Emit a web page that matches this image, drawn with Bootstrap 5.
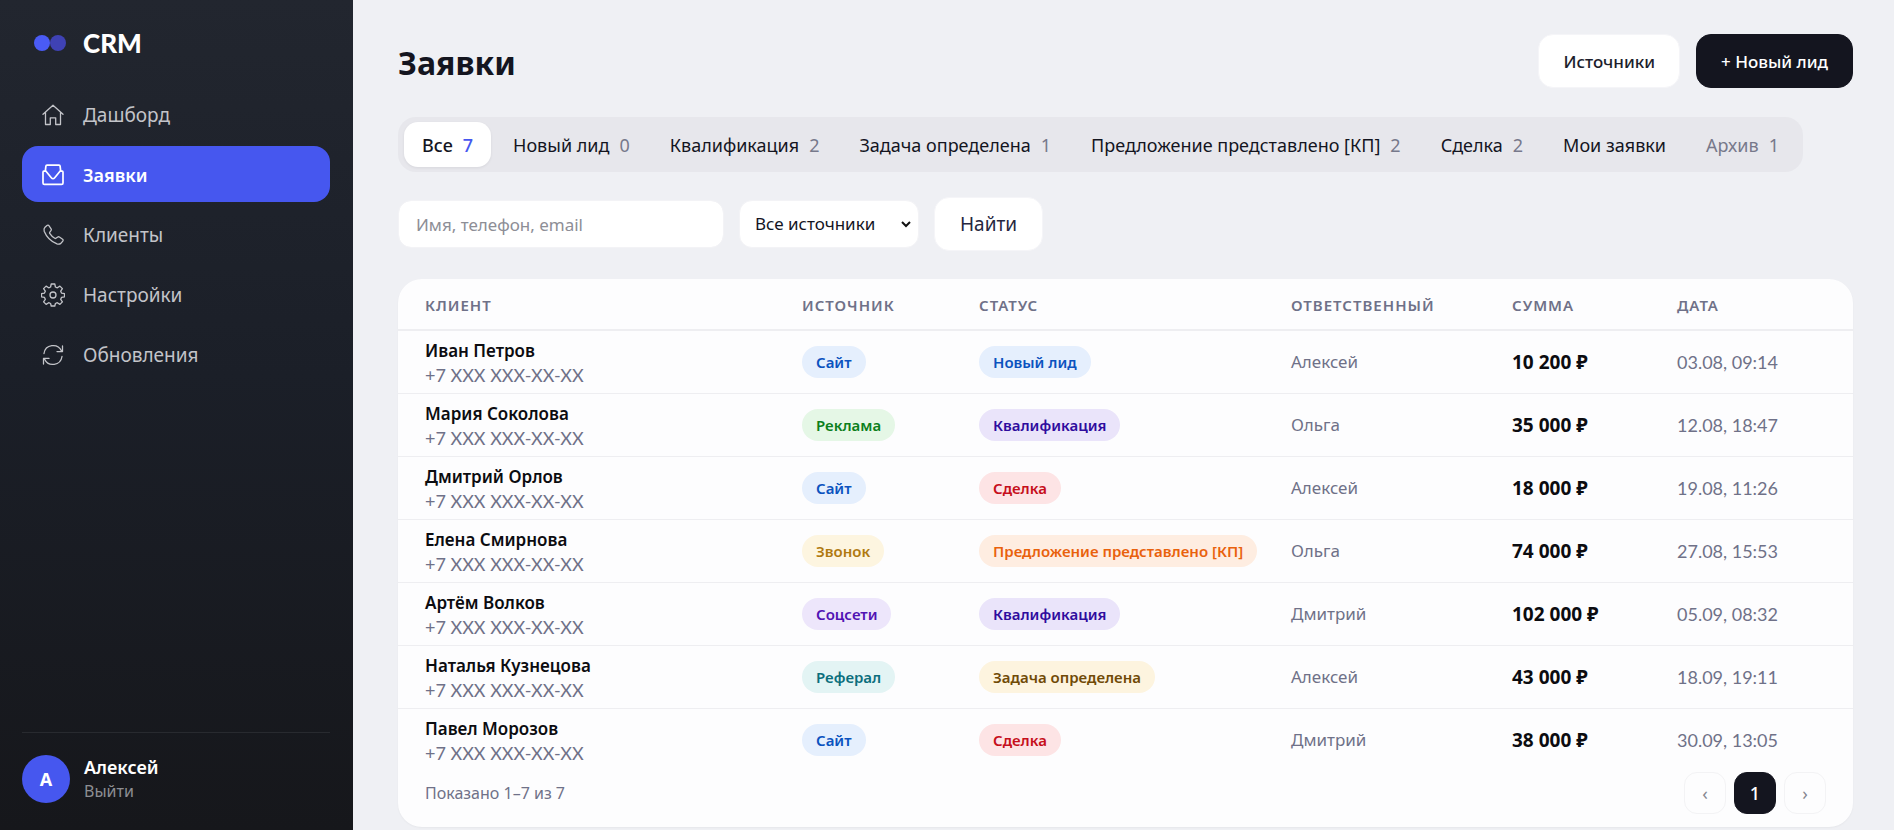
<!DOCTYPE html>
<html lang="ru">
<head>
<meta charset="utf-8">
<meta name="viewport" content="width=device-width, initial-scale=1">
<title>CRM — Заявки</title>
<link href="https://cdn.jsdelivr.net/npm/bootstrap@5.3.0/dist/css/bootstrap.min.css" rel="stylesheet">
<style>
:root{--ink:#14151f;--muted:#6f7188;--accent:#4657ef;--line:#eeeef1}
body{font-family:"Noto Sans","Open Sans",sans-serif;font-size:18px;line-height:24px;color:var(--ink);background:#eff0f4}
a{text-decoration:none}

.sidebar{width:353px;padding:24px 23px 27px 22px;background:linear-gradient(180deg,#22262f 0%,#1b1f28 45%,#16171b 100%)}
.brand{gap:17px;padding-left:12px;height:38px;font:900 26px/38px Lato,"Noto Sans",sans-serif;color:#fff}
.side-nav{gap:4px;margin-top:24px}
.side-nav .nav-link{display:flex;align-items:center;gap:18px;height:56px;padding:2px 19px 0;border-radius:16px;font-size:19px;color:#c3c4c9}
.side-nav .nav-link.active{background:var(--accent);color:#fff;font-weight:600;font-size:18px}
.side-nav svg{width:24px;height:24px;flex:none;fill:none;stroke:currentColor;stroke-width:1.3;stroke-linecap:round;stroke-linejoin:round}
.side-nav .active svg{stroke-width:1.7}
.account{gap:14px;border-top:1px solid #282a2f;padding-top:22px}
.avatar{width:48px;height:48px;background:var(--accent);color:#fff;font-weight:700}
.account strong{font-weight:600;color:#fff}
.account a{font-size:16px;color:#8d8e93}

.content{padding:34px 41px 3px 45px}
h1{font-size:32px;line-height:50px;font-weight:700}
.soft-btn,.dark-btn{height:54px;border-radius:15px;padding:1px 24px 0;font-size:17px;font-weight:500;border:1px solid #f5f5f8;background:#fff;color:#1d1e2c}
.dark-btn{background:var(--ink);border-color:var(--ink);color:#fff}
.soft-btn.search{font-size:19px;font-weight:400;color:#26273f;padding:0 25px}

.tabs{gap:4px;padding:5px 6px;margin-top:29px;border-radius:18px;background:#e7e7ec}
.tabs .nav-link{display:flex;gap:10px;align-items:center;height:45px;padding:0 18px;border-radius:14px;font-size:18px;color:var(--ink)}
.tabs .nav-link span{color:#77798b}
.tabs .nav-link.active{background:#fff;font-weight:500;box-shadow:0 1px 3px rgba(20,21,31,.07)}
.tabs .nav-link.active span{color:var(--accent)}
.tabs .nav-link.dim{color:#77798b}

.filters{gap:15px;margin-top:25px}
.filters .form-control,.filters .form-select{height:48px;border:1px solid #f3f3f6;border-radius:13px;font-size:17px;background-color:#fff;color:var(--ink)}
.filters .form-control{width:326px;padding:0 17px}
.filters .form-control::placeholder{color:#8d8e96}
.filters .form-select{width:180px;padding:0 30px 0 15px;background-size:12px 12px;background-position:right 6px center;background-image:url("data:image/svg+xml,%3Csvg xmlns='http://www.w3.org/2000/svg' viewBox='0 0 12 12'%3E%3Cpath d='M2 4l4 4 4-4' fill='none' stroke='%23111' stroke-width='2'/%3E%3C/svg%3E")}

.leads{margin-top:28px;border-radius:24px;background:#fdfdfe;box-shadow:0 1px 2px rgba(20,21,31,.04)}
.leads table{table-layout:fixed;width:100%;min-width:1350px}
.leads th{height:51px;padding-top:3px;font-size:15px;font-weight:600;letter-spacing:1px;color:var(--muted);border-bottom:2px solid var(--line)}
.leads td{height:63px;border-bottom:1px solid var(--line);color:var(--muted)}
.leads tr:last-child td{border-bottom-color:transparent}
.leads th:first-child,.leads td:first-child{padding-left:27px}
.leads td:first-child{padding-top:3px}
.c-source{width:177px}.c-status{width:312px}.c-owner{width:221px}.c-sum{width:165px}.c-date{width:177px}
.client{display:block;font-size:17px;font-weight:600;color:#0c0c10}
.phone{display:block;font-family:Lato,"Noto Sans",sans-serif;font-size:18px}
.when{font-family:Lato,"Noto Sans",sans-serif;font-size:18px}
.leads .owner{font-size:17px}
.leads .sum{font-size:19px;font-weight:700;color:#0c0c10}
.pill{display:inline-block;padding:0 14px;border-radius:16px;font-size:15px;line-height:32px;font-weight:600;white-space:nowrap;vertical-align:middle}
.p-blue{background:#e5effd;color:#0b53bf}
.p-green{background:#e5f7e6;color:#0c7f1c}
.p-violet{background:#ede6fb;color:#5113b4}
.p-indigo{background:#eae4fa;color:#2f0c9e}
.p-yellow{background:#fdf5e0;color:#b07a10}
.p-brown{background:#fdf4df;color:#704a06}
.p-orange{background:#feede1;color:#e9610c}
.p-red{background:#fde4e5;color:#c60f1b}
.p-teal{background:#e3f4f4;color:#0b6f7d}
.foot{padding:0 27px 13px;font-size:16px;color:var(--muted)}
.pager{gap:8px}
.pager .page-link{display:flex;align-items:center;justify-content:center;width:42px;height:42px;padding:0;border:1px solid #f3f3f5;border-radius:13px;background:transparent;color:#85868f;font-size:18px}
.pager .active .page-link{background:var(--ink);border-color:var(--ink);color:#fff;font-weight:500}
</style>
</head>
<body>
<div class="d-flex min-vh-100">
  <aside class="sidebar d-flex flex-column flex-shrink-0">
    <div class="brand d-flex align-items-center">
      <svg width="32" height="16" viewBox="0 0 32 16" aria-hidden="true"><circle cx="24" cy="8" r="8" fill="#3f42b4"/><circle cx="8" cy="8" r="8" fill="#4a5bf5"/></svg>
      CRM
    </div>
    <nav class="side-nav nav flex-column">
      <a class="nav-link" href="#"><svg viewBox="0 0 24 24"><path d="M2 11.200 12 2.200l10 9M4.500 9.500V21.500H9.300V14.800h5.400v6.700h4.800V9.500"/></svg>Дашборд</a>
      <a class="nav-link active" href="#" aria-current="page"><svg viewBox="0 0 24 24"><path d="M4.300 8.200 4.900 3.200Q5 2.200 6 2.200H18Q19 2.200 19.100 3.200L19.700 8.200"/><path d="M2.800 8.200H5L10.300 14.700Q12 16.800 13.700 14.700L19 8.200H21.200Q22 8.200 22 9.200V20Q22 21.400 20.600 21.400H3.400Q2 21.400 2 20V9.200Q2 8.200 2.800 8.200Z"/></svg>Заявки</a>
      <a class="nav-link" href="#"><svg viewBox="0 0 24 24"><path d="M4 4.300 6 2.500a1.300 1.300 0 0 1 1.900.2l2.200 3.100a1.400 1.400 0 0 1 0 1.600L8.700 9.300a1 1 0 0 0 0 1.100 15 15 0 0 0 5.100 4.900 1 1 0 0 0 1.100 0l1.900-1.300a1.400 1.400 0 0 1 1.600 0l3.200 2.200a1.300 1.300 0 0 1 .2 1.900l-1.900 2.100c-1 1-2.500 1.200-3.900.7A23 23 0 0 1 3.200 8.200C2.800 6.700 2.900 5.300 4 4.300Z"/></svg>Клиенты</a>
      <a class="nav-link" href="#"><svg viewBox="0 0 24 24"><circle cx="12" cy="12" r="3"/><path d="M10.200 1h3.600l.6 3 1.900.8 2.600-1.700 2.500 2.500-1.700 2.600.8 1.900 3 .6v3.100l-3 .6-.8 1.900 1.700 2.600-2.500 2.500-2.600-1.700-1.900.8-.6 2.500h-3.600l-.6-2.500-1.900-.8-2.600 1.700-2.500-2.500 1.700-2.600-.8-1.900-3-.6v-3.100l3-.6.8-1.900-1.700-2.600 2.500-2.500 2.600 1.700 1.900-.8Z"/></svg>Настройки</a>
      <a class="nav-link" href="#"><svg viewBox="0 0 24 24"><path d="M3 10.500A9.200 9.200 0 0 1 20.500 8M21.500 3V8.600H16M21 13.500A9.200 9.200 0 0 1 3.500 16M2.500 21V15.400H8"/></svg>Обновления</a>
    </nav>
    <div class="account d-flex align-items-center mt-auto">
      <div class="avatar rounded-circle d-flex align-items-center justify-content-center">А</div>
      <div class="d-flex flex-column"><strong>Алексей</strong><a href="#">Выйти</a></div>
    </div>
  </aside>

  <main class="content flex-grow-1 overflow-hidden">
    <header class="d-flex justify-content-between align-items-end">
      <h1 class="m-0">Заявки</h1>
      <div class="d-flex gap-3">
        <button type="button" class="btn soft-btn">Источники</button>
        <button type="button" class="btn dark-btn">+ Новый лид</button>
      </div>
    </header>

    <nav class="tabs nav d-inline-flex" aria-label="Статусы">
      <a class="nav-link active" href="#">Все <span>7</span></a>
      <a class="nav-link" href="#">Новый лид <span>0</span></a>
      <a class="nav-link" href="#">Квалификация <span>2</span></a>
      <a class="nav-link" href="#">Задача определена <span>1</span></a>
      <a class="nav-link" href="#">Предложение представлено [КП] <span>2</span></a>
      <a class="nav-link" href="#">Сделка <span>2</span></a>
      <a class="nav-link" href="#">Мои заявки</a>
      <a class="nav-link dim" href="#">Архив <span>1</span></a>
    </nav>

    <form class="filters d-flex flex-wrap align-items-center">
      <input type="text" class="form-control" placeholder="Имя, телефон, email" aria-label="Имя, телефон, email">
      <select class="form-select" aria-label="Источник"><option>Все источники</option><option>Сайт</option><option>Реклама</option><option>Звонок</option><option>Соцсети</option><option>Реферал</option></select>
      <button type="button" class="btn soft-btn search">Найти</button>
    </form>

    <section class="leads">
      <div class="overflow-auto">
      <table>
        <thead><tr><th>КЛИЕНТ</th><th class="c-source">ИСТОЧНИК</th><th class="c-status">СТАТУС</th><th class="c-owner">ОТВЕТСТВЕННЫЙ</th><th class="c-sum">СУММА</th><th class="c-date">ДАТА</th></tr></thead>
        <tbody>
          <tr><td><span class="client">Иван Петров</span><span class="phone">+7 XXX XXX-XX-XX</span></td><td><span class="pill p-blue">Сайт</span></td><td><span class="pill p-blue">Новый лид</span></td><td class="owner">Алексей</td><td class="sum">10 200 ₽</td><td class="when">03.08, 09:14</td></tr>
          <tr><td><span class="client">Мария Соколова</span><span class="phone">+7 XXX XXX-XX-XX</span></td><td><span class="pill p-green">Реклама</span></td><td><span class="pill p-indigo">Квалификация</span></td><td class="owner">Ольга</td><td class="sum">35 000 ₽</td><td class="when">12.08, 18:47</td></tr>
          <tr><td><span class="client">Дмитрий Орлов</span><span class="phone">+7 XXX XXX-XX-XX</span></td><td><span class="pill p-blue">Сайт</span></td><td><span class="pill p-red">Сделка</span></td><td class="owner">Алексей</td><td class="sum">18 000 ₽</td><td class="when">19.08, 11:26</td></tr>
          <tr><td><span class="client">Елена Смирнова</span><span class="phone">+7 XXX XXX-XX-XX</span></td><td><span class="pill p-yellow">Звонок</span></td><td><span class="pill p-orange">Предложение представлено [КП]</span></td><td class="owner">Ольга</td><td class="sum">74 000 ₽</td><td class="when">27.08, 15:53</td></tr>
          <tr><td><span class="client">Артём Волков</span><span class="phone">+7 XXX XXX-XX-XX</span></td><td><span class="pill p-violet">Соцсети</span></td><td><span class="pill p-indigo">Квалификация</span></td><td class="owner">Дмитрий</td><td class="sum">102 000 ₽</td><td class="when">05.09, 08:32</td></tr>
          <tr><td><span class="client">Наталья Кузнецова</span><span class="phone">+7 XXX XXX-XX-XX</span></td><td><span class="pill p-teal">Реферал</span></td><td><span class="pill p-brown">Задача определена</span></td><td class="owner">Алексей</td><td class="sum">43 000 ₽</td><td class="when">18.09, 19:11</td></tr>
          <tr><td><span class="client">Павел Морозов</span><span class="phone">+7 XXX XXX-XX-XX</span></td><td><span class="pill p-blue">Сайт</span></td><td><span class="pill p-red">Сделка</span></td><td class="owner">Дмитрий</td><td class="sum">38 000 ₽</td><td class="when">30.09, 13:05</td></tr>
        </tbody>
      </table>
      </div>
      <div class="foot d-flex justify-content-between align-items-center">
        <span>Показано 1–7 из 7</span>
        <ul class="pager list-unstyled d-flex m-0">
          <li><a class="page-link" href="#" aria-label="Назад">‹</a></li>
          <li class="active"><a class="page-link" href="#" aria-current="page">1</a></li>
          <li><a class="page-link" href="#" aria-label="Вперёд">›</a></li>
        </ul>
      </div>
    </section>
  </main>
</div>
<script src="https://cdn.jsdelivr.net/npm/bootstrap@5.3.0/dist/js/bootstrap.bundle.min.js"></script>
</body>
</html>
